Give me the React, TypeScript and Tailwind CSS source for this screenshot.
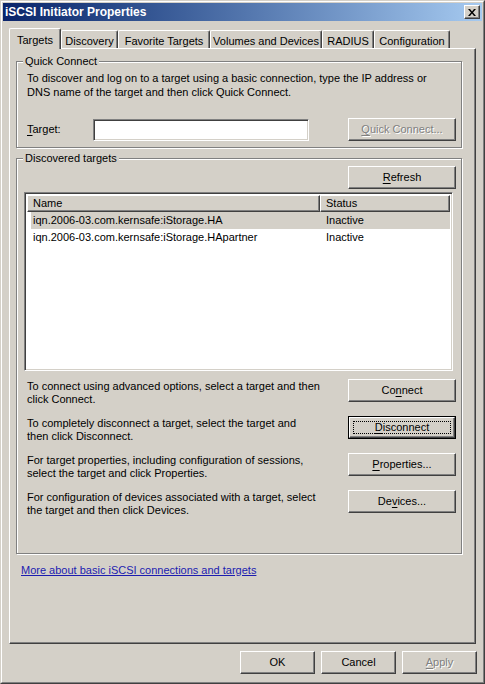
import type { ReactNode } from 'react'

const raised =
  'border border-t-white border-l-white border-r-[#404040] border-b-[#404040] shadow-[inset_-1px_-1px_0_#808080]'
const sunken =
  'border border-t-[#808080] border-l-[#808080] border-r-white border-b-white shadow-[inset_1px_1px_0_#404040,inset_-1px_-1px_0_#d4d0c8]'

function Key({ children }: { children: ReactNode }) {
  return <span className="underline underline-offset-[2px]">{children}</span>
}

function Button({
  children,
  isDefault,
  disabled,
  className = 'w-[108px]',
}: {
  children: ReactNode
  isDefault?: boolean
  disabled?: boolean
  className?: string
}) {
  if (isDefault) {
    return (
      <div className={`h-[23px] shrink-0 border border-black ${className}`}>
        <div className={`h-full ${raised} flex items-center justify-center p-[3px]`}>
          <div className="w-full h-full border border-dotted border-black flex items-center justify-center">
            {children}
          </div>
        </div>
      </div>
    )
  }
  return (
    <div
      className={`h-[23px] shrink-0 ${raised} flex items-center justify-center ${
        disabled ? 'text-[#808080] [text-shadow:1px_1px_0_#fff]' : ''
      } ${className}`}
    >
      {children}
    </div>
  )
}

function Group({ label, className, children }: { label: string; className: string; children: ReactNode }) {
  return (
    <div className={`relative border border-[#808080] shadow-[1px_1px_0_#fff,inset_1px_1px_0_#fff] ${className}`}>
      <span className="absolute -top-[7px] left-[6px] bg-[#d4d0c8] px-[2px] leading-[13px]">{label}</span>
      {children}
    </div>
  )
}

const tabs = [
  { label: 'Targets', w: 'w-[52px]' },
  { label: 'Discovery', w: 'w-[57px]' },
  { label: 'Favorite Targets', w: 'w-[92px]' },
  { label: 'Volumes and Devices', w: 'w-[112px]' },
  { label: 'RADIUS', w: 'w-[52px]' },
  { label: 'Configuration', w: 'w-[76px]' },
]

const actions = [
  {
    text: ['To connect using advanced options, select a target and then', 'click Connect.'],
    button: (
      <>
        Co<Key>n</Key>nect
      </>
    ),
  },
  {
    text: ['To completely disconnect a target, select the target and', 'then click Disconnect.'],
    button: (
      <>
        <Key>D</Key>isconnect
      </>
    ),
    isDefault: true,
  },
  {
    text: ['For target properties, including configuration of sessions,', 'select the target and click Properties.'],
    button: (
      <>
        <Key>P</Key>roperties...
      </>
    ),
  },
  {
    text: ['For configuration of devices associated with a target, select', 'the target and then click Devices.'],
    button: (
      <>
        De<Key>v</Key>ices...
      </>
    ),
  },
]

export default function App() {
  return (
    <div className="w-[485px] h-[684px] bg-[#d4d0c8] text-black text-[11px] leading-[13px] font-['Liberation_Sans',Arial,sans-serif] select-none">
      {/* window frame */}
      <div className="h-full border border-t-[#d4d0c8] border-l-[#d4d0c8] border-r-[#404040] border-b-[#404040]">
        <div className="h-full border border-t-white border-l-white border-r-[#808080] border-b-[#808080] p-px flex flex-col">
          {/* title bar */}
          <div className="h-[18px] shrink-0 bg-gradient-to-r from-[#0a246a] to-[#a6caf0] flex items-center justify-between pl-[2px] pr-[2px]">
            <span className="text-white font-bold text-[12px]">iSCSI Initiator Properties</span>
            <div className={`w-[16px] h-[14px] bg-[#d4d0c8] ${raised} flex items-center justify-center`}>
              <svg width="8" height="7" viewBox="0 0 8 7">
                <path d="M0 0h2l2 2.5L6 0h2L5 3.5 8 7H6L4 4.5 2 7H0l3-3.5z" fill="#000" />
              </svg>
            </div>
          </div>

          {/* tabs */}
          <div className="mt-[7px] ml-[6px] h-[20px] flex items-end">
            {tabs.map((t, i) =>
              i === 0 ? (
                <div
                  key={t.label}
                  className={`${t.w} h-[21px] -mb-px relative z-10 bg-[#d4d0c8] border-l border-t border-r border-t-white border-l-white border-r-[#404040] rounded-t-[2px] shadow-[inset_-1px_0_0_#808080] flex items-start justify-center pt-[5px]`}
                >
                  {t.label}
                </div>
              ) : (
                <div
                  key={t.label}
                  className={`${t.w} h-[18px] border-l border-t border-r border-t-white border-l-white border-r-[#404040] rounded-t-[2px] shadow-[inset_-1px_0_0_#808080] flex items-start justify-center pt-[4px]`}
                >
                  {t.label}
                </div>
              )
            )}
          </div>

          {/* tab panel */}
          <div className={`ml-[6px] w-[467px] h-[596px] ${raised} pt-[12px] pl-[6px] flex flex-col`}>
            <Group label="Quick Connect" className="w-[446px] h-[87px] pt-[9px] pl-[10px] pr-[5px]">
              <p className="leading-[14px]">
                To discover and log on to a target using a basic connection, type the IP address or
                <br />
                DNS name of the target and then click Quick Connect.
              </p>
              <div className="mt-[19px] flex items-center">
                <span className="w-[66px]">
                  <Key>T</Key>arget:
                </span>
                <div className={`w-[216px] h-[22px] bg-white ${sunken}`} />
                <div className="flex-1" />
                <Button disabled>
                  <Key>Q</Key>uick Connect...
                </Button>
              </div>
            </Group>

            <Group label="Discovered targets" className="mt-[10px] w-[446px] h-[396px] pt-[7px] pl-[7px] pr-[5px]">
              <div className="flex justify-end">
                <Button>
                  <Key>R</Key>efresh
                </Button>
              </div>
              {/* list view */}
              <div className={`mt-[3px] w-[429px] h-[179px] bg-white ${sunken} p-[2px] flex flex-col`}>
                <div className="flex h-[17px] shrink-0 bg-[#d4d0c8]">
                  <div className={`w-[293px] ${raised} pl-[5px] flex items-center`}>Name</div>
                  <div className={`flex-1 ${raised} pl-[5px] flex items-center`}>Status</div>
                </div>
                <div className="flex h-[17px] items-center ml-[4px] bg-[#d4d0c8]">
                  <span className="w-[289px] pl-[2px]">iqn.2006-03.com.kernsafe:iStorage.HA</span>
                  <span className="pl-[6px]">Inactive</span>
                </div>
                <div className="flex h-[17px] items-center ml-[4px]">
                  <span className="w-[289px] pl-[2px]">iqn.2006-03.com.kernsafe:iStorage.HApartner</span>
                  <span className="pl-[6px]">Inactive</span>
                </div>
              </div>

              <div className="mt-[8px] flex flex-col gap-[14px] pl-[3px]">
                {actions.map((a, i) => (
                  <div key={i} className="h-[23px] flex items-start justify-between">
                    <p className="pt-[1px]">
                      {a.text[0]}
                      <br />
                      {a.text[1]}
                    </p>
                    <Button isDefault={a.isDefault}>{a.button}</Button>
                  </div>
                ))}
              </div>
            </Group>

            <div className="mt-[10px] ml-[5px]">
              <span className="text-[#1c1cb0] underline">More about basic iSCSI connections and targets</span>
            </div>
          </div>

          {/* dialog buttons */}
          <div className="mt-[7px] flex justify-end gap-[6px] pr-[5px]">
            <Button className="w-[75px]">OK</Button>
            <Button className="w-[75px]">Cancel</Button>
            <Button className="w-[75px]" disabled>
              <Key>A</Key>pply
            </Button>
          </div>
        </div>
      </div>
    </div>
  )
}
